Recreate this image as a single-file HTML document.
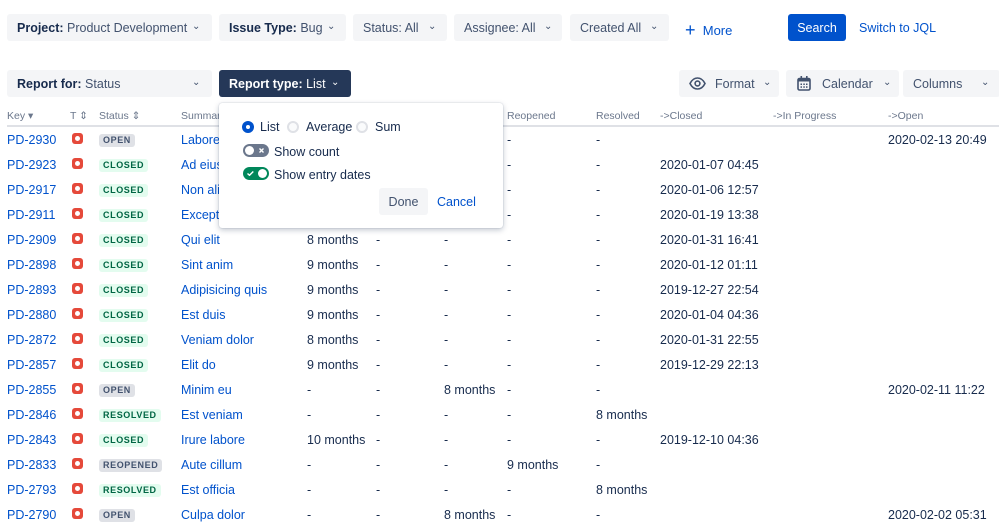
<!DOCTYPE html>
<html><head><meta charset="utf-8"><style>
*{box-sizing:border-box;margin:0;padding:0}
body{width:999px;height:528px;overflow:hidden;background:#fff;font-family:"Liberation Sans",sans-serif;color:#172b4d;font-size:12.5px;position:relative}
.a{position:absolute;white-space:nowrap}
.btn{position:absolute;background:#f4f5f7;border-radius:3px;height:27px;line-height:29px;font-size:12.5px;color:#42526e;padding-left:10px}
.btn b{color:#172b4d}
.chev{position:absolute;top:-2px;font-size:10px;color:#42526e}
.h{position:absolute;top:110px;font-size:10.5px;color:#6b778c}
.r{position:absolute;left:0;width:999px;height:25px}
.r span{position:absolute;top:0;line-height:18px;white-space:nowrap}
.k{left:7px;color:#0052cc}
.ic{left:72px;top:2px!important;width:11px;height:11px;background:#e5493a;border-radius:3px}
.ic:after{content:"";position:absolute;left:3px;top:3px;width:5px;height:5px;background:#fff;border-radius:50%}
.lz{left:99px;top:3px!important;line-height:13px!important;font-size:9px;font-weight:bold;padding:0 4px;border-radius:3px;letter-spacing:.6px}
.g{background:#e3fcef;color:#006644}.n{background:#dfe1e6;color:#42526e}
.s{left:181px;color:#0052cc}
.c5{left:307px}.c6{left:376px}.c7{left:444px}.c8{left:507px}.c9{left:596px}.c10{left:660px}.c12{left:888px}
</style></head><body>
<div class="btn" style="left:7px;top:14px;width:205px"><b>Project:</b> Product Development<span class="chev" style="left:185px">&#8964;</span></div>
<div class="btn" style="left:219px;top:14px;width:127px"><b>Issue Type:</b> Bug<span class="chev" style="left:108px">&#8964;</span></div>
<div class="btn" style="left:353px;top:14px;width:94px">Status: All<span class="chev" style="left:75px">&#8964;</span></div>
<div class="btn" style="left:454px;top:14px;width:108px">Assignee: All<span class="chev" style="left:90px">&#8964;</span></div>
<div class="btn" style="left:570px;top:14px;width:99px">Created All<span class="chev" style="left:80px">&#8964;</span></div>
<div class="a" style="left:685px;top:19px;color:#0052cc;font-size:13px"><span style="font-size:18px;position:relative;top:1px">+</span>&nbsp; More</div>
<div class="a" style="left:788px;top:14px;width:58px;height:27px;line-height:29px;background:#0052cc;color:#fff;border-radius:3px;text-align:center;font-size:12.5px">Search</div>
<div class="a" style="left:859px;top:21px;color:#0052cc;font-size:12.5px">Switch to JQL</div>

<div class="btn" style="left:7px;top:70px;width:205px"><b>Report for:</b> Status<span class="chev" style="left:185px">&#8964;</span></div>
<div class="btn" style="left:219px;top:70px;width:132px;background:#253858;color:#fff"><b style="color:#fff">Report type:</b> List<span class="chev" style="left:112px;color:#fff">&#8964;</span></div>
<div class="btn" style="left:679px;top:70px;width:100px;padding-left:36px"><svg style="position:absolute;left:10px;top:7px" width="17" height="13" viewBox="0 0 17 13"><path d="M1 6.5C3 2.5 6 1 8.5 1S14 2.5 16 6.5C14 10.5 11 12 8.5 12S3 10.5 1 6.5Z" fill="none" stroke="#42526e" stroke-width="1.6"/><circle cx="8.5" cy="6.5" r="2.4" fill="none" stroke="#42526e" stroke-width="1.6"/></svg>Format<span class="chev" style="left:84px">&#8964;</span></div>
<div class="btn" style="left:786px;top:70px;width:113px;padding-left:36px"><svg style="position:absolute;left:11px;top:6px" width="14" height="15" viewBox="0 0 14 15"><rect x="1" y="2.5" width="12" height="11.5" rx="1.5" fill="none" stroke="#42526e" stroke-width="1.6"/><rect x="1" y="2.5" width="12" height="3" fill="#42526e"/><rect x="3.5" y="0" width="1.6" height="3" fill="#42526e"/><rect x="9" y="0" width="1.6" height="3" fill="#42526e"/><g fill="#42526e"><rect x="3.5" y="7.5" width="1.5" height="1.5"/><rect x="6.3" y="7.5" width="1.5" height="1.5"/><rect x="9" y="7.5" width="1.5" height="1.5"/><rect x="3.5" y="10.3" width="1.5" height="1.5"/><rect x="6.3" y="10.3" width="1.5" height="1.5"/><rect x="9" y="10.3" width="1.5" height="1.5"/></g></svg>Calendar<span class="chev" style="left:97px">&#8964;</span></div>
<div class="btn" style="left:903px;top:70px;width:97px;padding-left:10px">Columns<span class="chev" style="left:78px">&#8964;</span></div>

<div class="h" style="left:7px">Key &#9662;</div><div class="h" style="left:70px">T &#8661;</div><div class="h" style="left:99px">Status &#8661;</div><div class="h" style="left:181px">Summary</div>
<div class="h" style="left:507px">Reopened</div><div class="h" style="left:596px">Resolved</div><div class="h" style="left:660px">-&gt;Closed</div><div class="h" style="left:773px">-&gt;In Progress</div><div class="h" style="left:888px">-&gt;Open</div>
<div class="a" style="left:7px;top:125px;width:992px;height:2px;background:#dfe1e6"></div>

<div class="r" style="top:131px"><span class="k">PD-2930</span><span class="ic"></span><span class="lz n">OPEN</span><span class="s">Labore</span><span class="c8">-</span><span class="c9">-</span><span class="c12">2020-02-13 20:49</span></div>
<div class="r" style="top:156px"><span class="k">PD-2923</span><span class="ic"></span><span class="lz g">CLOSED</span><span class="s">Ad eius</span><span class="c8">-</span><span class="c9">-</span><span class="c10">2020-01-07 04:45</span></div>
<div class="r" style="top:181px"><span class="k">PD-2917</span><span class="ic"></span><span class="lz g">CLOSED</span><span class="s">Non ali</span><span class="c8">-</span><span class="c9">-</span><span class="c10">2020-01-06 12:57</span></div>
<div class="r" style="top:206px"><span class="k">PD-2911</span><span class="ic"></span><span class="lz g">CLOSED</span><span class="s">Except</span><span class="c8">-</span><span class="c9">-</span><span class="c10">2020-01-19 13:38</span></div>
<div class="r" style="top:231px"><span class="k">PD-2909</span><span class="ic"></span><span class="lz g">CLOSED</span><span class="s">Qui elit</span><span class="c5">8 months</span><span class="c6">-</span><span class="c7">-</span><span class="c8">-</span><span class="c9">-</span><span class="c10">2020-01-31 16:41</span></div>
<div class="r" style="top:256px"><span class="k">PD-2898</span><span class="ic"></span><span class="lz g">CLOSED</span><span class="s">Sint anim</span><span class="c5">9 months</span><span class="c6">-</span><span class="c7">-</span><span class="c8">-</span><span class="c9">-</span><span class="c10">2020-01-12 01:11</span></div>
<div class="r" style="top:281px"><span class="k">PD-2893</span><span class="ic"></span><span class="lz g">CLOSED</span><span class="s">Adipisicing quis</span><span class="c5">9 months</span><span class="c6">-</span><span class="c7">-</span><span class="c8">-</span><span class="c9">-</span><span class="c10">2019-12-27 22:54</span></div>
<div class="r" style="top:306px"><span class="k">PD-2880</span><span class="ic"></span><span class="lz g">CLOSED</span><span class="s">Est duis</span><span class="c5">9 months</span><span class="c6">-</span><span class="c7">-</span><span class="c8">-</span><span class="c9">-</span><span class="c10">2020-01-04 04:36</span></div>
<div class="r" style="top:331px"><span class="k">PD-2872</span><span class="ic"></span><span class="lz g">CLOSED</span><span class="s">Veniam dolor</span><span class="c5">8 months</span><span class="c6">-</span><span class="c7">-</span><span class="c8">-</span><span class="c9">-</span><span class="c10">2020-01-31 22:55</span></div>
<div class="r" style="top:356px"><span class="k">PD-2857</span><span class="ic"></span><span class="lz g">CLOSED</span><span class="s">Elit do</span><span class="c5">9 months</span><span class="c6">-</span><span class="c7">-</span><span class="c8">-</span><span class="c9">-</span><span class="c10">2019-12-29 22:13</span></div>
<div class="r" style="top:381px"><span class="k">PD-2855</span><span class="ic"></span><span class="lz n">OPEN</span><span class="s">Minim eu</span><span class="c5">-</span><span class="c6">-</span><span class="c7">8 months</span><span class="c8">-</span><span class="c9">-</span><span class="c12">2020-02-11 11:22</span></div>
<div class="r" style="top:406px"><span class="k">PD-2846</span><span class="ic"></span><span class="lz g">RESOLVED</span><span class="s">Est veniam</span><span class="c5">-</span><span class="c6">-</span><span class="c7">-</span><span class="c8">-</span><span class="c9">8 months</span></div>
<div class="r" style="top:431px"><span class="k">PD-2843</span><span class="ic"></span><span class="lz g">CLOSED</span><span class="s">Irure labore</span><span class="c5">10 months</span><span class="c6">-</span><span class="c7">-</span><span class="c8">-</span><span class="c9">-</span><span class="c10">2019-12-10 04:36</span></div>
<div class="r" style="top:456px"><span class="k">PD-2833</span><span class="ic"></span><span class="lz n">REOPENED</span><span class="s">Aute cillum</span><span class="c5">-</span><span class="c6">-</span><span class="c7">-</span><span class="c8">9 months</span><span class="c9">-</span></div>
<div class="r" style="top:481px"><span class="k">PD-2793</span><span class="ic"></span><span class="lz g">RESOLVED</span><span class="s">Est officia</span><span class="c5">-</span><span class="c6">-</span><span class="c7">-</span><span class="c8">-</span><span class="c9">8 months</span></div>
<div class="r" style="top:506px"><span class="k">PD-2790</span><span class="ic"></span><span class="lz n">OPEN</span><span class="s">Culpa dolor</span><span class="c5">-</span><span class="c6">-</span><span class="c7">8 months</span><span class="c8">-</span><span class="c9">-</span><span class="c12">2020-02-02 05:31</span></div>

<div class="a" style="left:219px;top:103px;width:284px;height:125px;background:#fff;border-radius:3px;box-shadow:0 2px 6px rgba(9,30,66,.25),0 0 1px rgba(9,30,66,.3)">
 <div class="a" style="left:23px;top:18px;width:12px;height:12px;border-radius:50%;background:#0052cc"><div style="position:absolute;left:4px;top:4px;width:4px;height:4px;border-radius:50%;background:#fff"></div></div>
 <div class="a" style="left:41px;top:17px">List</div>
 <div class="a" style="left:68px;top:18px;width:12px;height:12px;border-radius:50%;border:2px solid #dfe1e6;background:#fafbfc"></div>
 <div class="a" style="left:87px;top:17px">Average</div>
 <div class="a" style="left:137px;top:18px;width:12px;height:12px;border-radius:50%;border:2px solid #dfe1e6;background:#fafbfc"></div>
 <div class="a" style="left:156px;top:17px">Sum</div>
 <div class="a" style="left:24px;top:41px;width:26px;height:13px;border-radius:7px;background:#6b778c"><div style="position:absolute;left:2px;top:2px;width:9px;height:9px;border-radius:50%;background:#fff"></div><svg style="position:absolute;left:16px;top:4px" width="5" height="5"><path d="M0.5 0.5L4.5 4.5M4.5 0.5L0.5 4.5" stroke="#fff" stroke-width="1.4"/></svg></div>
 <div class="a" style="left:55px;top:42px">Show count</div>
 <div class="a" style="left:24px;top:64px;width:26px;height:13px;border-radius:7px;background:#00875a"><div style="position:absolute;right:2px;top:2px;width:9px;height:9px;border-radius:50%;background:#fff"></div><svg style="position:absolute;left:4px;top:4px" width="7" height="5"><path d="M0.5 2.5L2.5 4.3L6.3 0.5" stroke="#fff" stroke-width="1.4" fill="none"/></svg></div>
 <div class="a" style="left:55px;top:65px">Show entry dates</div>
 <div class="a" style="left:160px;top:85px;width:49px;height:27px;line-height:28px;background:#f4f5f7;border-radius:3px;text-align:center;color:#42526e">Done</div>
 <div class="a" style="left:218px;top:92px;color:#0052cc">Cancel</div>
</div>
</body></html>
